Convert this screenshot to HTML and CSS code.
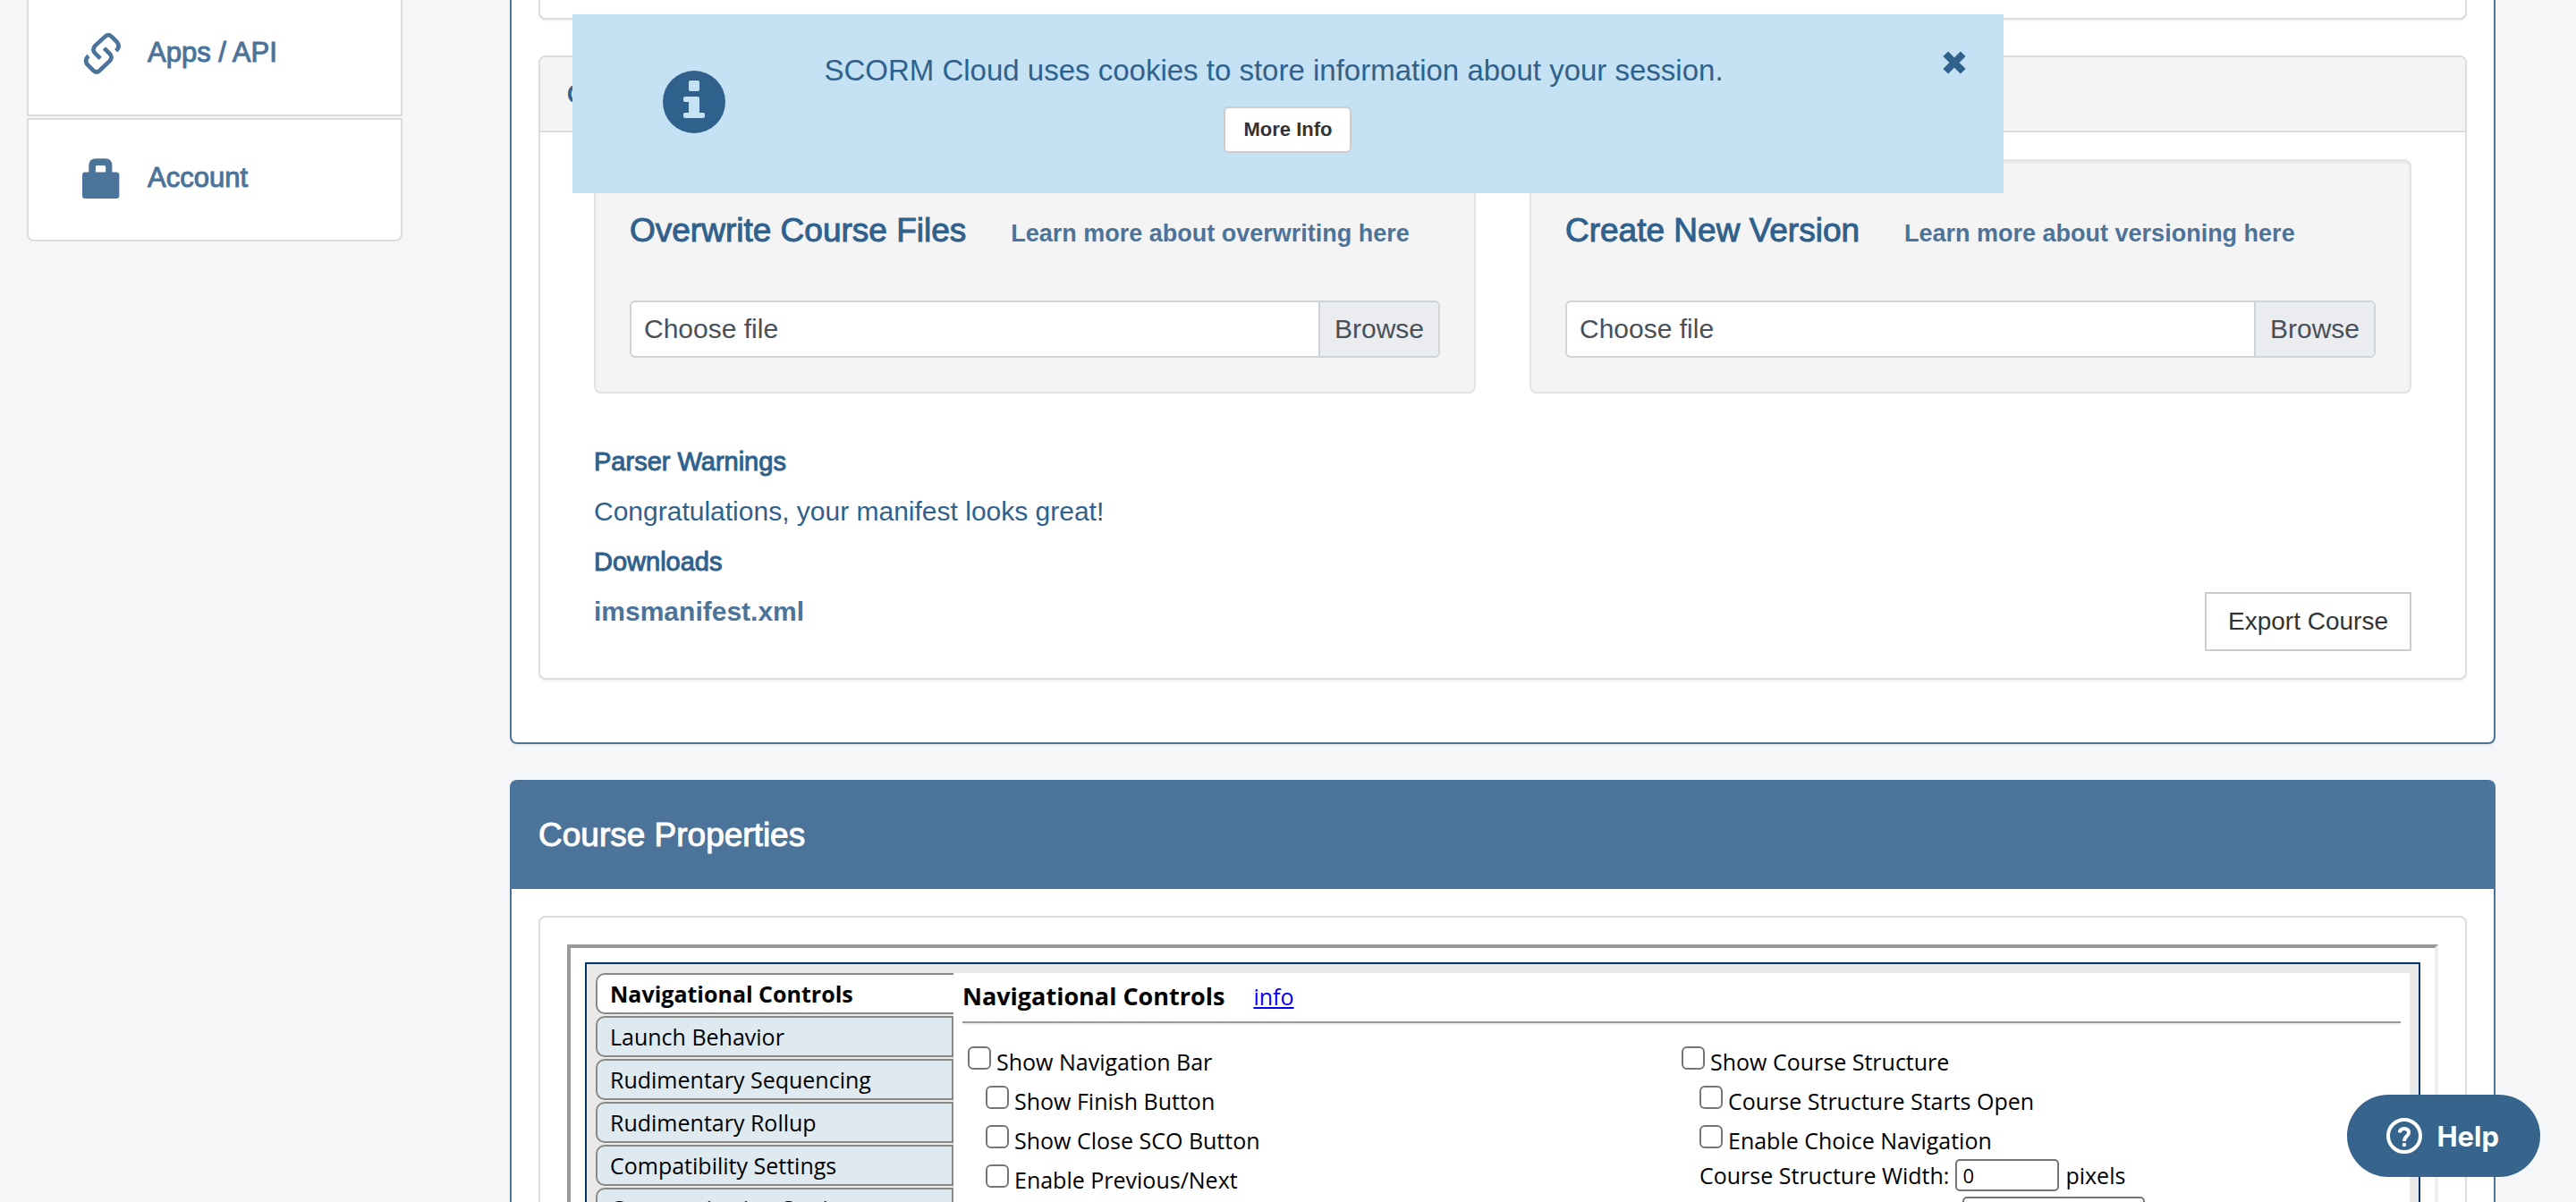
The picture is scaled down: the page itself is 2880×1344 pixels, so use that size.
FILE: index.html
```html
<!DOCTYPE html>
<html lang="en">
<head>
<meta charset="utf-8">
<title>SCORM Cloud</title>
<link rel="stylesheet" href="styles.css">
</head>
<body>
<div class="page">
  <nav class="sidebar">
    <a class="side-item" href="#apps">
      <svg class="side-icon" viewBox="36 42 130 140" fill="none" stroke="currentColor" stroke-width="14" stroke-linejoin="round"><path d="M150 104Q165 90 154 75L134 55Q124 46 114 55L80 86Q68 99 78 111L97 130"/><path d="M57 121Q43 134 52 149L74 171Q84 180 94 171L129 138Q139 126 130 115L110 95"/></svg>
      Apps / API
    </a>
    <a class="side-item" href="#account">
      <svg class="side-icon" viewBox="36 462 130 140" fill="currentColor" fill-rule="evenodd"><path d="M58 511V490Q58 465 83 465H113Q137 465 137 490V511H151Q161 511 161 521V590Q161 600 151 600H46Q36 600 36 590V521Q36 511 46 511ZM81 511H115V493Q115 488 110 488H86Q81 488 81 493Z"/></svg>
      Account
    </a>
  </nav>

  <main class="main">
    <section class="card card-top">
      <div class="panel panel-end"></div>
      <div class="panel">
        <h3 class="panel-head medium">Course Files</h3>
        <div class="panel-body">
          <div class="wells">
            <div class="well">
              <div class="well-head">
                <h4 class="well-title medium">Overwrite Course Files</h4>
                <a class="learn" href="#overwriting">Learn more about overwriting here</a>
              </div>
              <label class="file"><input type="file" class="file-input"><span class="file-name">Choose file</span><span class="file-browse">Browse</span></label>
            </div>
            <div class="well">
              <div class="well-head">
                <h4 class="well-title medium">Create New Version</h4>
                <a class="learn" href="#versioning">Learn more about versioning here</a>
              </div>
              <label class="file"><input type="file" class="file-input"><span class="file-name">Choose file</span><span class="file-browse">Browse</span></label>
            </div>
          </div>
          <div class="course-info">
            <div class="info-lines">
              <h5 class="info-title medium">Parser Warnings</h5>
              <p class="info-text">Congratulations, your manifest looks great!</p>
              <h5 class="info-title medium">Downloads</h5>
              <a class="info-link" href="#manifest">imsmanifest.xml</a>
            </div>
            <button type="button" class="export">Export Course</button>
          </div>
        </div>
      </div>
    </section>

    <section class="card">
      <h2 class="card-head medium">Course Properties</h2>
      <div class="card-body">
        <div class="panel properties">
          <div class="frame">
            <div class="editor">
              <div class="tabs">
                <button type="button" class="tab active">Navigational Controls</button>
                <button type="button" class="tab">Launch Behavior</button>
                <button type="button" class="tab">Rudimentary Sequencing</button>
                <button type="button" class="tab">Rudimentary Rollup</button>
                <button type="button" class="tab">Compatibility Settings</button>
                <button type="button" class="tab">Communication Settings</button>
              </div>
              <div class="editor-pane">
                <div class="pane-head"><h3 class="pane-title">Navigational Controls</h3><a class="pane-info" href="#info">info</a></div>
                <hr class="rule">
                <div class="options">
                  <div class="option-col">
                    <label class="option"><input type="checkbox" class="box">Show Navigation Bar</label>
                    <label class="option nested"><input type="checkbox" class="box">Show Finish Button</label>
                    <label class="option nested"><input type="checkbox" class="box">Show Close SCO Button</label>
                    <label class="option nested"><input type="checkbox" class="box">Enable Previous/Next</label>
                  </div>
                  <div class="option-col">
                    <label class="option"><input type="checkbox" class="box">Show Course Structure</label>
                    <label class="option nested"><input type="checkbox" class="box">Course Structure Starts Open</label>
                    <label class="option nested"><input type="checkbox" class="box">Enable Choice Navigation</label>
                    <div class="field"><label for="width">Course Structure Width:</label><input id="width" class="text-field" type="text" value="0"><span>pixels</span></div>
                    <div class="field"><label for="height">Course Structure Height:</label><input id="height" class="text-field wide" type="text"></div>
                  </div>
                </div>
              </div>
            </div>
          </div>
        </div>
      </div>
    </section>
  </main>
</div>

<aside class="banner">
  <svg class="banner-icon" viewBox="0 0 70 70"><circle cx="35" cy="35" r="35" fill="#30618c"/><path fill="#c4e2f3" d="M31 11H39Q41 11 41 13V21Q41 23 39 23H31Q29 23 29 21V13Q29 11 31 11ZM25 29H39Q41 29 41 31V47H45Q47 47 47 49V51Q47 53 45 53H25Q23 53 23 51V49Q23 47 25 47H29V35H25Q23 35 23 33V31Q23 29 25 29Z"/></svg>
  <div class="banner-body">
    <p class="banner-text">SCORM Cloud uses cookies to store information about your session.</p>
    <button type="button" class="more">More Info</button>
  </div>
  <button type="button" class="close" aria-label="Close"><svg viewBox="0 0 24 24" width="26" height="26"><path d="M3 3L21 21M21 3L3 21" stroke="#30618c" stroke-width="7.500"/></svg></button>
</aside>

<button type="button" class="help"><svg viewBox="0 0 40 40" width="40" height="40" fill="none" stroke="#fff" stroke-width="4"><circle cx="20" cy="20" r="18"/><path d="M15 16.500Q15 12 20 12Q25 12 25 16.500C25 20 20 20.500 20 26"/><circle cx="20" cy="30" r="2.200" fill="#fff" stroke="none"/></svg>Help</button>
</body>
</html>
```
FILE: styles.css
```css
* { box-sizing: border-box; }

body {
  margin: 0;
  background: #f5f6f8;
  color: #30618c;
  font-family: "Liberation Sans", Arial, sans-serif;
  font-size: 30px;
}

h2, h3, h4, h5, p { margin: 0; font-weight: normal; }
a { color: #4c7399; text-decoration: none; }
button { font-family: inherit; cursor: pointer; }
.medium { -webkit-text-stroke: 1px currentColor; }

.page {
  display: flex;
  align-items: flex-start;
  gap: 120px;
  height: 100vh;
  padding: 0 90px 0 30px;
  overflow: hidden;
}

/* Sidebar */
.sidebar {
  flex: 0 0 420px;
  display: flex;
  flex-direction: column;
  gap: 2px;
  margin-top: -8px;
}
.side-item {
  display: flex;
  align-items: center;
  gap: 30px;
  height: 138px;
  padding: 0 60px 4px;
  border: 2px solid #dcdcdc;
  background: #fff;
  font-size: 31px;
  -webkit-text-stroke: 1px currentColor;
}
.side-item:last-child { border-radius: 0 0 8px 8px; }
.side-icon { width: 43px; height: 47px; }

/* Cards and panels */
.main { flex: 1; min-width: 0; }
.card {
  margin-bottom: 40px;
  border: 2px solid #4c7399;
  border-radius: 8px;
  background: #fff;
  box-shadow: 0 2px 2px rgba(0, 0, 0, .05);
}
.card-top {
  padding: 0 30px 70px;
  border-top: 0;
  border-radius: 0 0 8px 8px;
}
.card-head {
  height: 120px;
  padding-left: 30px;
  background: #4c7399;
  color: #fff;
  font-size: 37px;
  line-height: 120px;
}
.card-body { padding: 30px; }
.panel {
  border: 2px solid #dcdcdc;
  border-radius: 8px;
  background: #fff;
  box-shadow: 0 2px 2px rgba(0, 0, 0, .05);
}
.panel-end {
  height: 22px;
  margin-bottom: 40px;
  border-top: 0;
  border-radius: 0 0 8px 8px;
}
.panel-head {
  height: 84px;
  padding-left: 30px;
  border-bottom: 2px solid #dcdcdc;
  border-radius: 6px 6px 0 0;
  background: #f4f4f4;
  font-size: 29px;
  line-height: 82px;
}
.panel-body { padding: 30px 60px; }

/* Upload wells */
.wells { display: grid; grid-template-columns: 1fr 1fr; gap: 60px; }
.well {
  padding: 58px 38px 38px;
  border: 2px solid #e3e3e3;
  border-radius: 8px;
  background: #f4f4f4;
  box-shadow: inset 0 2px 2px rgba(0, 0, 0, .05);
}
.well-head {
  display: flex;
  align-items: baseline;
  gap: 50px;
  height: 40px;
  margin-bottom: 58px;
  line-height: 40px;
}
.well-title { font-size: 37px; }
.learn { font-size: 27px; font-weight: bold; }
.file {
  position: relative;
  display: flex;
  height: 64px;
  border: 2px solid #ced4da;
  border-radius: 6px;
  background: #fff;
  color: #495057;
  line-height: 60px;
  overflow: hidden;
}
.file-input { position: absolute; opacity: 0; }
.file-name { flex: 1; padding-left: 14px; }
.file-browse { padding: 0 16px; border-left: 2px solid #ced4da; background: #eaecf0; }

.course-info {
  display: flex;
  justify-content: space-between;
  align-items: flex-end;
  margin-top: 48px;
}
.info-lines { padding-bottom: 16px; line-height: 56px; }
.info-title { font-size: 29px; }
.info-link { font-weight: bold; }
.export {
  height: 66px;
  padding: 0 24px;
  border: 2px solid #ccc;
  background: #fff;
  color: #333;
  font-size: 28px;
}

/* Course properties editor */
.properties { padding: 30px; }
.frame {
  padding: 16px;
  border: 4px solid;
  border-color: #999 #eee #eee #999;
}
.editor {
  display: flex;
  padding: 10px;
  border: 2px solid #036;
  background: #e9e9e9;
  color: #000;
  font-family: "Open Sans", "Noto Sans", sans-serif;
  font-size: 25px;
}
.tabs { flex: 0 0 400px; display: flex; flex-direction: column; gap: 2px; }
.tab {
  height: 46px;
  padding: 0 14px;
  border: 2px solid #888;
  border-radius: 10px 0 0 10px;
  background: #dfe9f0;
  color: #000;
  font-size: 25px;
  line-height: 38px;
  text-align: left;
}
.tab.active { border-right: 0; background: #fff; font-weight: bold; }
.editor-pane { flex: 1; padding: 6px 10px 80px; background: #fff; }
.pane-head { display: flex; align-items: baseline; gap: 32px; height: 48px; line-height: 40px; }
.pane-title { font-size: 27px; font-weight: bold; }
.pane-info { color: #00e; text-decoration: underline; }
.rule { height: 4px; margin: 0 0 14px; border: 0; border-top: 2px solid #999; border-bottom: 2px solid #eee; }
.options { display: grid; grid-template-columns: 798px 1fr; padding-left: 6px; }
.option { display: flex; gap: 6px; height: 44px; padding-top: 10px; line-height: 34px; }
.nested { margin-left: 20px; }
.box {
  appearance: none;
  width: 26px;
  height: 26px;
  margin: 0;
  border: 2px solid #767676;
  border-radius: 6px;
  background: #fff;
}
.field { display: flex; align-items: center; gap: 7px; height: 36px; margin: 4px 0 6px 20px; line-height: 34px; }
.text-field {
  width: 116px;
  height: 36px;
  padding: 0 6px;
  border: 2px solid #767676;
  border-radius: 5px;
  color: #000;
  font: 22px "Open Sans", sans-serif;
}
.wide { width: 204px; }

/* Cookie banner */
.banner {
  position: fixed;
  top: 16px;
  right: 0;
  left: 0;
  display: grid;
  grid-template-columns: 1fr auto 1fr;
  align-items: start;
  width: 1600px;
  max-width: 100%;
  height: 200px;
  margin: 0 auto;
  padding-top: 41px;
  background: #c4e2f3;
}
.banner-icon { width: 70px; height: 70px; margin: 22px 0 0 101px; }
.banner-body { display: flex; flex-direction: column; align-items: center; gap: 18px; }
.banner-text { padding-right: 32px; font-size: 33px; line-height: 44px; }
.more {
  height: 52px;
  padding: 0 20px;
  border: 2px solid #ccc;
  border-radius: 6px;
  background: #fff;
  color: #333;
  font-size: 22px;
  font-weight: bold;
}
.close { justify-self: end; margin-right: 42px; padding: 0; border: 0; background: none; line-height: 0; }

.help {
  position: fixed;
  right: 40px;
  bottom: 28px;
  display: flex;
  align-items: center;
  gap: 16px;
  height: 92px;
  padding: 0 46px 0 44px;
  border: 0;
  border-radius: 46px;
  background: #37648d;
  color: #fff;
  font: bold 31px Inter, sans-serif;
}
```
